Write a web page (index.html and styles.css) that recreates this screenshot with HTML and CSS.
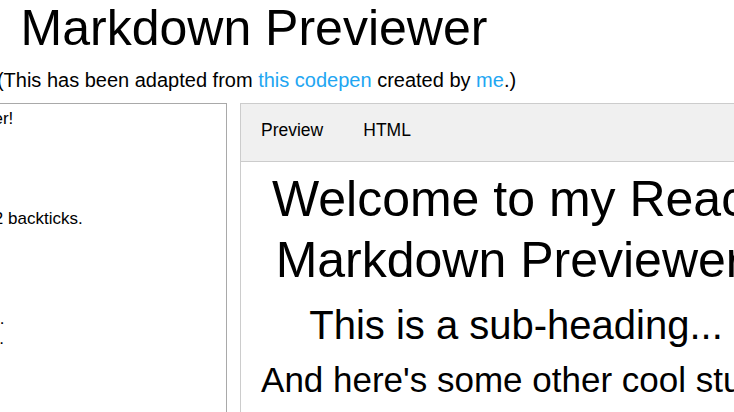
FILE: index.html
```html
<!DOCTYPE html>
<html lang="en">
<head>
<meta charset="utf-8">
<title>Markdown Previewer</title>
<link rel="stylesheet" href="styles.css">
</head>
<body>
<div class="app">
  <header class="header">
    <h1 class="title">Markdown Previewer</h1>
    <p class="subtitle">(This has been adapted from <a href="#">this codepen</a> created by <a href="#">me</a>.)</p>
  </header>
  <main class="main">
    <textarea class="editor" spellcheck="false"># Welcome to my React Markdown Previewer!

## This is a sub-heading...
### And here's some other cool stuff:

Here is some code, &#96;&lt;div&gt;&lt;/div&gt;&#96;, between 2 backticks.

&#96;&#96;&#96;
// multi-line code
&#96;&#96;&#96;
You can also make text bold, or, maybe italic.
And feel free to go crazy, crossing things out.

- And of course there are lists.
  - Some are bulleted.

> Block Quotes!</textarea>
    <section class="preview">
      <nav class="tabs">
        <span class="tab">Preview</span>
        <span class="tab">HTML</span>
      </nav>
      <div class="content">
        <h1 class="md-h1">Welcome to my React Markdown Previewer!</h1>
        <h2 class="md-h2">This is a sub-heading...</h2>
        <h3 class="md-h3">And here's some other cool stuff:</h3>
        <p class="md-p">Here is some code, <code>&lt;div&gt;&lt;/div&gt;</code>, between 2 backticks.</p>
      </div>
    </section>
  </main>
</div>
</body>
</html>
```
FILE: styles.css
```css
html, body {
  margin: 0;
  padding: 0;
  overflow: hidden;
  background: #ffffff;
}

body {
  font-family: "Liberation Sans", Arial, sans-serif;
  color: #000000;
}

.app {
  margin-left: -338px;
}

.header {
  width: 1184px;
  text-align: center;
}

.title {
  margin: 0;
  font-size: 50px;
  font-weight: normal;
  line-height: 57.5px;
}

.subtitle {
  margin: 11px 0 0;
  padding-left: 5px;
  font-size: 20px;
  line-height: 23px;
}

.subtitle a {
  color: #22a6f2;
  text-decoration: none;
}

.main {
  display: flex;
  gap: 13px;
  width: 1130px;
  margin-top: 11.5px;
}

.editor {
  box-sizing: border-box;
  width: 565px;
  height: 400px;
  flex: none;
  margin: 0;
  padding: 4.5px 2px;
  border: 1px solid #a9a9a9;
  font-family: "Liberation Sans", Arial, sans-serif;
  font-size: 17px;
  line-height: normal;
  color: #000000;
  resize: none;
  outline: none;
  overflow: hidden;
  white-space: pre;
}

.preview {
  flex: 1;
  border: 1px solid #cccccc;
  height: 400px;
}

.tabs {
  display: flex;
  height: 53px;
  padding-bottom: 4px;
  align-items: center;
  background: #f0f0f0;
  border-bottom: 1px solid #cccccc;
}

.tab {
  padding: 0 20px;
  font-size: 17.5px;
}

.content {
  padding: 7px 0 0;
  text-align: center;
}

.md-h1 {
  margin: 0 0 13px;
  font-size: 50px;
  font-weight: normal;
  line-height: 61px;
}

.md-h2 {
  margin: 0 0 15px;
  font-size: 40px;
  font-weight: normal;
  line-height: 42px;
}

.md-h3 {
  margin: 0;
  font-size: 35px;
  font-weight: normal;
  line-height: 37px;
}

.md-p {
  font-size: 17px;
}
```
